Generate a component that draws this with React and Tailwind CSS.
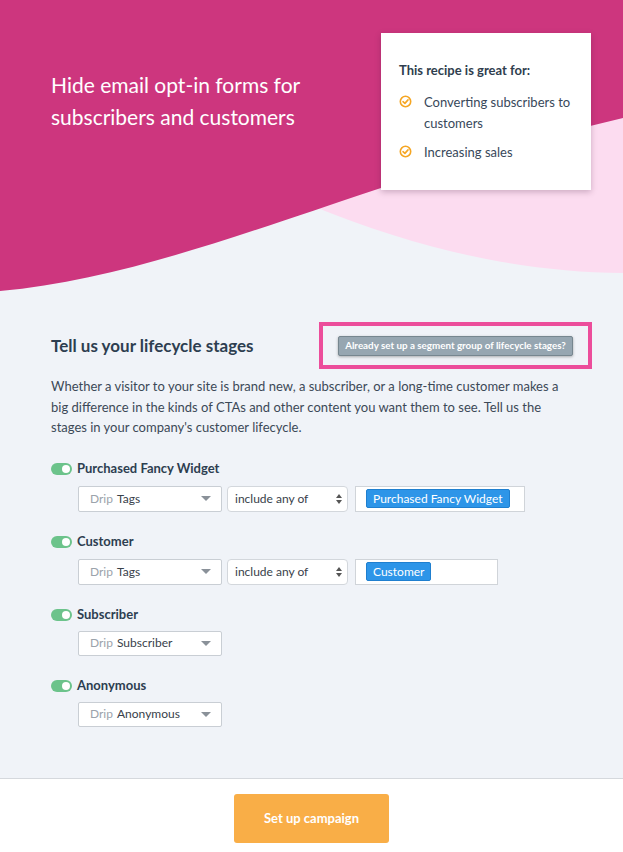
import { useState } from 'react'

const stages = [
  { label: 'Purchased Fancy Widget', source: 'Tags', tag: 'Purchased Fancy Widget', inputWidth: 'w-[170px]' },
  { label: 'Customer', source: 'Tags', tag: 'Customer', inputWidth: 'w-[143px]' },
  { label: 'Subscriber', source: 'Subscriber' },
  { label: 'Anonymous', source: 'Anonymous' },
]

function CheckIcon() {
  return (
    <svg width="13" height="13" viewBox="0 0 13 13" className="shrink-0">
      <circle cx="6.5" cy="6.5" r="5.2" fill="none" stroke="#f5a623" strokeWidth="1.6" />
      <path d="M4 6.7 L5.9 8.4 L9 4.9" fill="none" stroke="#f5a623" strokeWidth="1.6" strokeLinecap="round" strokeLinejoin="round" />
    </svg>
  )
}

function Toggle({ on, onClick }) {
  return (
    <button
      onClick={onClick}
      className={`w-[21px] h-[12px] rounded-full flex items-center px-[2px] ${on ? 'bg-[#6cc38b] justify-end' : 'bg-[#c8cdd3] justify-start'}`}
    >
      <span className="w-[8px] h-[8px] rounded-full bg-white" />
    </button>
  )
}

function SourceSelect({ value, short }) {
  return (
    <div className={`w-[144px] ${short ? 'h-[25px]' : 'h-[26px]'} bg-white border border-[#c9ced4] rounded-[2px] flex items-center pl-[11px] pr-[10px] text-[12px]`}>
      <span className="text-[#9ba3ab] mr-[4px]">Drip</span>
      <span className="text-[#38414a] flex-1">{value}</span>
      <span className="w-0 h-0 border-l-[5px] border-r-[5px] border-t-[5px] border-l-transparent border-r-transparent border-t-[#8a9199]" />
    </div>
  )
}

function MatchSelect() {
  return (
    <div className="w-[121px] h-[26px] bg-white border border-[#d3d7dc] rounded-[4px] flex items-center pl-[7px] pr-[5px] text-[12px] text-[#38414a]">
      <span className="flex-1">include any of</span>
      <span className="flex flex-col gap-[2px]">
        <span className="w-0 h-0 border-l-[3px] border-r-[3px] border-b-[4px] border-l-transparent border-r-transparent border-b-[#555]" />
        <span className="w-0 h-0 border-l-[3px] border-r-[3px] border-t-[4px] border-l-transparent border-r-transparent border-t-[#555]" />
      </span>
    </div>
  )
}

export default function App() {
  const [enabled, setEnabled] = useState(stages.map(() => true))

  return (
    <div className="min-h-screen flex flex-col bg-[#f0f3f8] text-[#2f3e4e]" style={{ fontFamily: 'Lato, "Open Sans", sans-serif' }}>
      <header className="relative h-[300px]">
        <svg className="absolute inset-0 w-full h-full" viewBox="0 0 623 300" preserveAspectRatio="none">
          <path d="M300 0 L623 0 L623 273 C520 272 420 250 310 205 Z" fill="#fcdcf0" />
          <path d="M0 0 L623 0 L623 118 C360 180 180 275 0 291 Z" fill="#cd367e" />
        </svg>
        <div className="relative flex items-start justify-between pt-[33px] pl-[51px] pr-[32px]">
          <h1 className="mt-[36px] text-[21px] leading-[32px] text-white">
            Hide email opt-in forms for
            <br />
            subscribers and customers
          </h1>
          <div className="w-[210px] bg-white shadow-[0_2px_6px_rgba(60,20,50,0.25)] pl-[18px] pr-[12px] pt-[28px] pb-[27px]">
            <p className="text-[13px] font-bold leading-[18px] text-[#2f3e4e]">This recipe is great for:</p>
            <ul className="mt-[13px] flex flex-col gap-[8px] text-[13px] leading-[21px] text-[#38485a]">
              <li className="flex items-start gap-[12px]">
                <span className="mt-[3px]"><CheckIcon /></span>
                <span>Converting subscribers to customers</span>
              </li>
              <li className="flex items-start gap-[12px]">
                <span className="mt-[3px]"><CheckIcon /></span>
                <span>Increasing sales</span>
              </li>
            </ul>
          </div>
        </div>
      </header>

      <main className="flex-1 pl-[51px] pr-[31px]">
        <div className="mt-[22px] flex items-center justify-between">
          <h2 className="text-[17px] font-bold text-[#2d3e50]">Tell us your lifecycle stages</h2>
          <div className="w-[273px] h-[47px] border-[4px] border-[#ec4d9b] flex items-center justify-center">
            <button className="w-[235px] h-[20px] bg-[#96a6b1] border border-[#76868f] rounded-[2px] shadow-[0_1px_3px_rgba(0,0,0,0.3)] text-white text-[9.8px] font-bold">
              Already set up a segment group of lifecycle stages?
            </button>
          </div>
        </div>

        <p className="mt-[7px] w-[520px] text-[13px] leading-[20.5px] text-[#3c4957]">
          Whether a visitor to your site is brand new, a subscriber, or a long-time customer makes a big difference in the kinds of CTAs and other content you want them to see. Tell us the stages in your company's customer lifecycle.
        </p>

        <div className="mt-[22px] flex flex-col gap-[21px]">
          {stages.map((s, i) => (
            <div key={s.label}>
              <div className="flex items-center gap-[5px] h-[18px]">
                <Toggle on={enabled[i]} onClick={() => setEnabled(enabled.map((v, j) => (j === i ? !v : v)))} />
                <span className="text-[13px] font-bold text-[#2d3e50]">{s.label}</span>
              </div>
              <div className={`${s.tag ? 'mt-[8px]' : 'mt-[7px]'} ml-[27px] flex items-center gap-[5px]`}>
                <SourceSelect value={s.source} short={!s.tag} />
                {s.tag && (
                  <>
                    <MatchSelect />
                    <div className={`${s.inputWidth} h-[26px] ml-[2px] bg-white border border-[#d0d4d9] flex items-center pl-[10px]`}>
                      <span className="h-[19px] px-[6px] bg-[#2d95e8] border border-[#1f7fcf] rounded-[2px] text-white text-[12px] leading-[17px]">
                        {s.tag}
                      </span>
                    </div>
                  </>
                )}
              </div>
            </div>
          ))}
        </div>
      </main>

      <footer className="h-[74px] bg-white border-t border-[#d5d8dd] flex justify-center pt-[15px]">
        <button className="w-[155px] h-[49px] bg-[#f9ae47] rounded-[3px] text-white text-[13px] font-bold">
          Set up campaign
        </button>
      </footer>
    </div>
  )
}
